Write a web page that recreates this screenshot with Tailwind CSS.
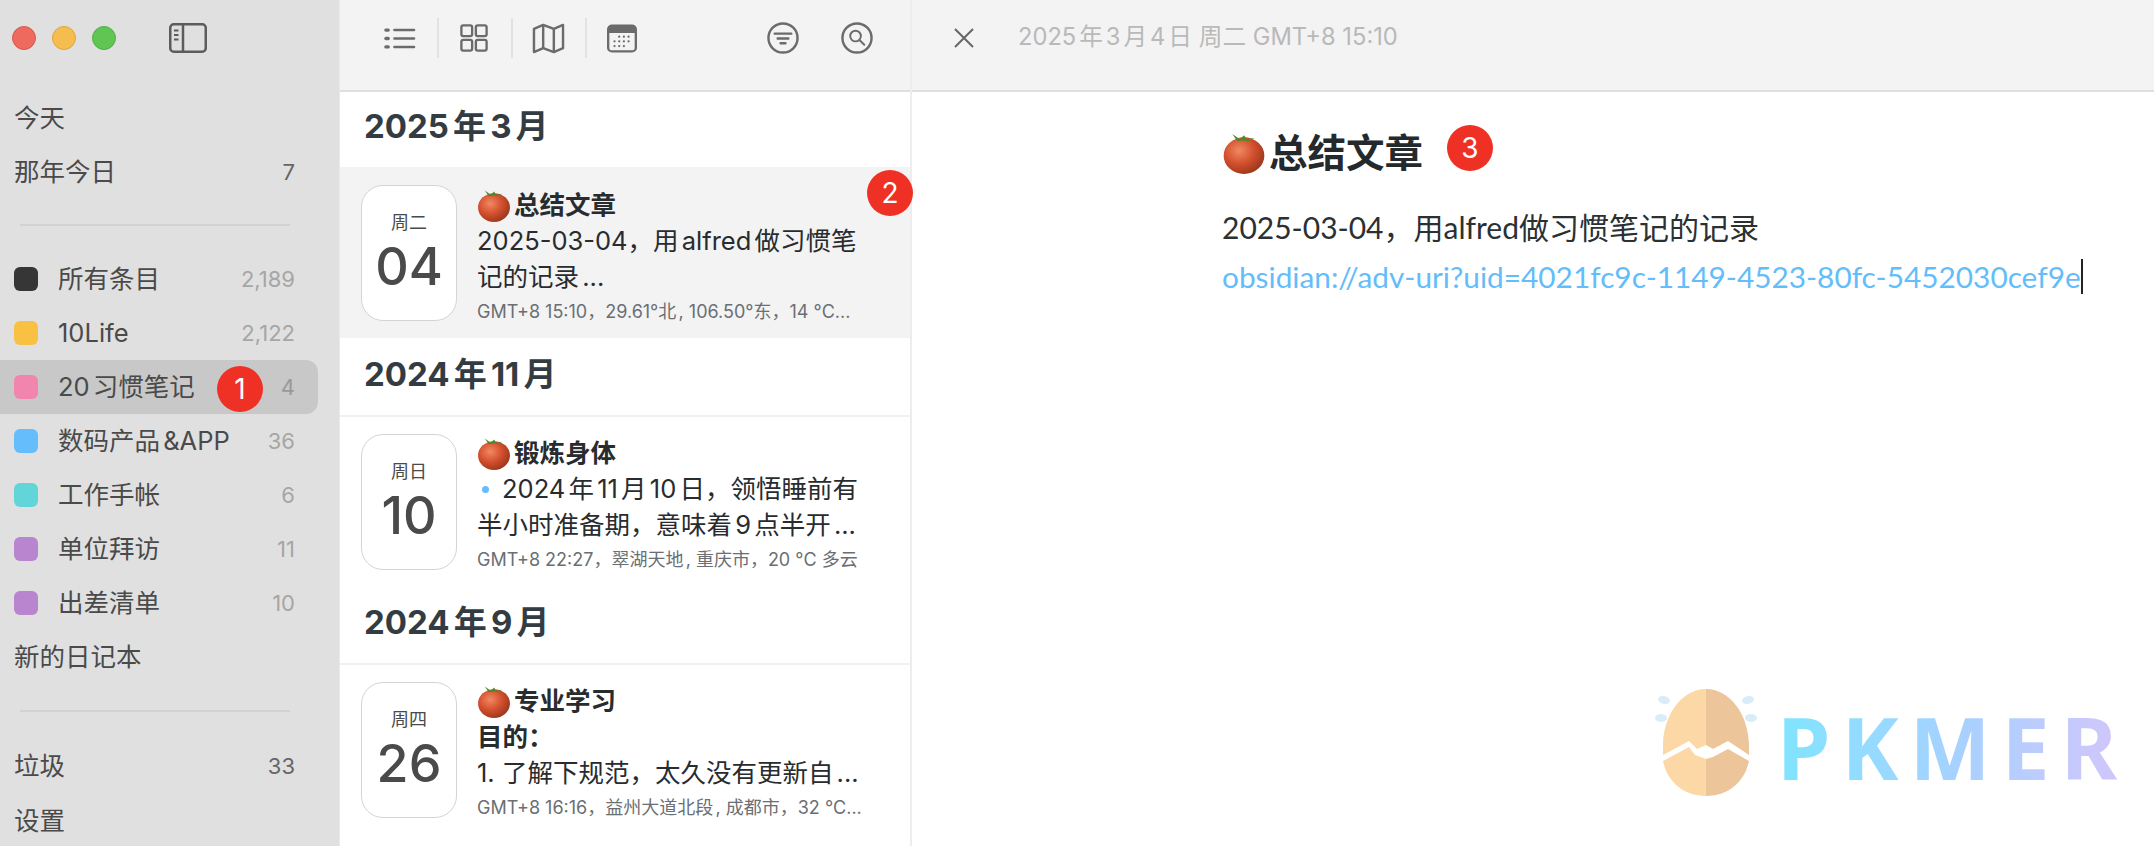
<!DOCTYPE html>
<html lang="zh-CN">
<head>
    <meta charset="UTF-8">
    <title>日记</title>
    <script src="https://cdn.jsdelivr.net/npm/@tailwindcss/browser@4"></script>
</head>
<body class="bg-white overflow-hidden font-['Inter','Noto_Sans_CJK_SC',sans-serif] [text-autospace:normal]">
    <!-- shared tomato emoji -->
    <svg class="absolute w-0 h-0" aria-hidden="true">
        <defs>
            <radialGradient id="tomato-fill" cx="38%" cy="36%" r="72%">
                <stop offset="0" stop-color="#f08a62"/>
                <stop offset="0.5" stop-color="#d4502e"/>
                <stop offset="1" stop-color="#93341a"/>
            </radialGradient>
            <symbol id="tomato" viewBox="0 0 32 32">
                <ellipse cx="16" cy="18" rx="15.500" ry="14" fill="url(#tomato-fill)"/>
                <path d="M7 1.500 13 5.500 16 2.500 18 5.500 24 4.500 19.500 7 16 6.500 11 7Z" fill="#4d8a2c"/>
            </symbol>
        </defs>
    </svg>

    <div class="flex h-[846px] w-[2154px]">
        <!-- sidebar -->
        <aside class="w-[340px] shrink-0 bg-[#e0e0e0] border-r border-[#e9e9e9] text-[25.500px] text-[#4a4a4a]">
            <div class="h-[91px] flex items-center pl-[12px] pb-[15px]">
                <span class="w-[24px] h-[24px] rounded-full bg-[#ee6a5f] border border-[#d9574d]"></span>
                <span class="w-[24px] h-[24px] rounded-full bg-[#f5bd4f] border border-[#dfa63d] ml-[16px]"></span>
                <span class="w-[24px] h-[24px] rounded-full bg-[#61c554] border border-[#52ae46] ml-[16px]"></span>
                <svg class="ml-[53px] w-[38px] h-[30px]" viewBox="0 0 38 30" fill="none" stroke="#5c5c5c" stroke-width="2.500">
                    <rect x="1.250" y="1.250" width="35.500" height="27.500" rx="3.500"/>
                    <path d="M14 1.250v27.500"/>
                    <path d="M5 7.500h4.500M5 12h4.500M5 16.500h4.500" stroke-width="2"/>
                </svg>
            </div>
            <div class="w-[318px] h-[54px] flex items-center pl-[14px]">今天</div>
            <div class="w-[318px] h-[54px] flex items-center justify-between pl-[14px] pr-[23px]"><span>那年今日</span><span class="text-[22px] text-[#666666]">7</span></div>

            <div class="h-[2px] w-[270px] ml-[20px] mt-[25px] mb-[26px] bg-[#d2d2d2]"></div>

            <div class="w-[318px] h-[54px] flex items-center pl-[14px] pr-[23px]">
                <span class="w-[24px] h-[24px] rounded-[6px] bg-[#363636]"></span><span class="ml-[20px] flex-1">所有条目</span><span class="text-[22px] text-[#a6a6a6]">2,189</span>
            </div>
            <div class="w-[318px] h-[54px] flex items-center pl-[14px] pr-[23px]">
                <span class="w-[24px] h-[24px] rounded-[6px] bg-[#f8c144]"></span><span class="ml-[20px] flex-1">10Life</span><span class="text-[22px] text-[#a6a6a6]">2,122</span>
            </div>
            <div class="relative w-[318px] h-[54px] flex items-center pl-[14px] pr-[23px] bg-[#c8c8c8] rounded-r-[12px]">
                <span class="w-[24px] h-[24px] rounded-[6px] bg-[#f285ae]"></span><span class="ml-[20px] flex-1">20习惯笔记</span><span class="text-[22px] text-[#999999]">4</span>
                <span class="absolute left-[217px] top-[6px] w-[46px] h-[46px] rounded-full bg-[#ee3124] text-white text-[28px] flex items-center justify-center">1</span>
            </div>
            <div class="w-[318px] h-[54px] flex items-center pl-[14px] pr-[23px]">
                <span class="w-[24px] h-[24px] rounded-[6px] bg-[#65bdfb]"></span><span class="ml-[20px] flex-1">数码产品&amp;APP</span><span class="text-[22px] text-[#a6a6a6]">36</span>
            </div>
            <div class="w-[318px] h-[54px] flex items-center pl-[14px] pr-[23px]">
                <span class="w-[24px] h-[24px] rounded-[6px] bg-[#62d5d8]"></span><span class="ml-[20px] flex-1">工作手帐</span><span class="text-[22px] text-[#a6a6a6]">6</span>
            </div>
            <div class="w-[318px] h-[54px] flex items-center pl-[14px] pr-[23px]">
                <span class="w-[24px] h-[24px] rounded-[6px] bg-[#b985cf]"></span><span class="ml-[20px] flex-1">单位拜访</span><span class="text-[22px] text-[#a6a6a6]">11</span>
            </div>
            <div class="w-[318px] h-[54px] flex items-center pl-[14px] pr-[23px]">
                <span class="w-[24px] h-[24px] rounded-[6px] bg-[#b985cf]"></span><span class="ml-[20px] flex-1">出差清单</span><span class="text-[22px] text-[#a6a6a6]">10</span>
            </div>
            <div class="w-[318px] h-[54px] flex items-center pl-[14px]">新的日记本</div>

            <div class="h-[2px] w-[270px] ml-[20px] mt-[26px] mb-[27px] bg-[#d2d2d2]"></div>

            <div class="w-[318px] h-[54px] flex items-center justify-between pl-[14px] pr-[23px]"><span>垃圾</span><span class="text-[22px] text-[#666666]">33</span></div>
            <div class="w-[318px] h-[54px] mt-[1px] flex items-center pl-[14px]">设置</div>
        </aside>

        <!-- entry list -->
        <section class="w-[572px] shrink-0 border-r-2 border-[#ededed]">
            <div class="h-[92px] bg-[#f3f3f3] border-b-2 border-[#dfdfdf] flex items-center pb-[14px]">
                <svg class="ml-[44px] w-[32px] h-[23px]" viewBox="0 0 34 24" fill="none" stroke="#6b6b6b" stroke-width="2.500" stroke-linecap="round">
                    <path d="M11 3h21M11 12h21M11 21h21"/>
                    <path d="M2 3h2.500M2 12h2.500M2 21h2.500" stroke-width="3.500"/>
                </svg>
                <span class="ml-[21px] w-[2px] h-[40px] bg-[#e2e2e2]"></span>
                <svg class="ml-[21px] w-[28px] h-[28px]" viewBox="0 0 30 30" fill="none" stroke="#6b6b6b" stroke-width="2.500">
                    <rect x="1.500" y="1.500" width="11.500" height="11.500" rx="2"/><rect x="17" y="1.500" width="11.500" height="11.500" rx="2"/>
                    <rect x="1.500" y="17" width="11.500" height="11.500" rx="2"/><rect x="17" y="17" width="11.500" height="11.500" rx="2"/>
                </svg>
                <span class="ml-[23px] w-[2px] h-[40px] bg-[#e2e2e2]"></span>
                <svg class="ml-[19px] w-[33px] h-[31px]" viewBox="0 0 34 32" fill="none" stroke="#6b6b6b" stroke-width="2.500" stroke-linejoin="round">
                    <path d="M2 6 11.500 2 22.500 6 32 2V26L22.500 30 11.500 26 2 30Z"/>
                    <path d="M11.500 2V26M22.500 6V30"/>
                </svg>
                <span class="ml-[20px] w-[2px] h-[40px] bg-[#e2e2e2]"></span>
                <svg class="ml-[20px] w-[30px] h-[29px]" viewBox="0 0 32 30">
                    <rect x="1.250" y="1.250" width="29.500" height="27.500" rx="4" fill="none" stroke="#6b6b6b" stroke-width="2.500"/>
                    <path d="M1.250 5.250a4 4 0 0 1 4-4h21.500a4 4 0 0 1 4 4V9H1.250Z" fill="#6b6b6b"/>
                    <g fill="#6b6b6b">
                        <circle cx="13" cy="13" r="1.200"/><circle cx="18" cy="13" r="1.200"/><circle cx="23" cy="13" r="1.200"/>
                        <circle cx="8" cy="18" r="1.200"/><circle cx="13" cy="18" r="1.200"/><circle cx="18" cy="18" r="1.200"/><circle cx="23" cy="18" r="1.200"/>
                        <circle cx="8" cy="23" r="1.200"/><circle cx="13" cy="23" r="1.200"/><circle cx="18" cy="23" r="1.200"/>
                    </g>
                </svg>
                <svg class="ml-[130px] w-[32px] h-[32px]" viewBox="0 0 33 33" fill="none" stroke="#6b6b6b" stroke-width="2.500" stroke-linecap="round">
                    <circle cx="16.500" cy="16.500" r="15"/>
                    <path d="M8 12h17M11 17h11M14 22h5"/>
                </svg>
                <svg class="ml-[42px] w-[32px] h-[32px]" viewBox="0 0 33 33" fill="none" stroke="#6b6b6b" stroke-width="2.500" stroke-linecap="round">
                    <circle cx="16.500" cy="16.500" r="15"/>
                    <circle cx="15" cy="14.500" r="5.500" stroke-width="2"/>
                    <path d="M19 18.500 24 23.500" stroke-width="2"/>
                </svg>
            </div>

            <div class="h-[75px] flex items-center pl-[24px] pb-[5px] text-[33px] font-bold text-[#333c42]">2025年3月</div>
            <div class="relative h-[171px] bg-[#f3f3f3] flex pl-[21px] pt-[18px]">
                <div class="w-[96px] h-[136px] shrink-0 bg-white border border-[#d4d4d4] rounded-[22px] flex flex-col items-center justify-center text-[#4a4a4a]">
                    <div class="text-[18px] leading-[24px] mb-[4px]">周二</div>
                    <div class="text-[52px] leading-[56px] font-medium">04</div>
                </div>
                <div class="ml-[20px] pt-[2px] whitespace-nowrap text-[25.500px] leading-[36px] text-[#282c2f]">
                    <div class="flex items-center font-bold h-[36px]"><svg class="w-[34px] h-[33px] mr-[3px]"><use href="#tomato"/></svg>总结文章</div>
                    <div>2025-03-04，用alfred做习惯笔</div>
                    <div>记的记录...</div>
                    <div class="text-[18px] leading-[34px] text-[#6a6f73]">GMT+8 15:10，29.61°北, 106.50°东，14 °C...</div>
                </div>
                <span class="absolute left-[527px] top-[3px] w-[46px] h-[46px] rounded-full bg-[#ee3124] text-white text-[28px] flex items-center justify-center">2</span>
            </div>

            <div class="h-[79px] border-b-2 border-[#f1f1f1] flex items-center pl-[24px] pb-[3px] text-[33px] font-bold text-[#333c42]">2024年11月</div>
            <div class="h-[169px] flex pl-[21px] pt-[17px]">
                <div class="w-[96px] h-[136px] shrink-0 bg-white border border-[#d4d4d4] rounded-[22px] flex flex-col items-center justify-center text-[#4a4a4a]">
                    <div class="text-[18px] leading-[24px] mb-[4px]">周日</div>
                    <div class="text-[52px] leading-[56px] font-medium">10</div>
                </div>
                <div class="ml-[20px] pt-[1px] whitespace-nowrap text-[25.500px] leading-[36px] text-[#282c2f]">
                    <div class="flex items-center font-bold h-[36px]"><svg class="w-[34px] h-[33px] mr-[3px]"><use href="#tomato"/></svg>锻炼身体</div>
                    <div class="flex items-center"><span class="w-[7px] h-[7px] ml-[5px] mr-[13px] rounded-full bg-[#65bdfb]"></span>2024年11月10日，领悟睡前有</div>
                    <div>半小时准备期，意味着9点半开...</div>
                    <div class="text-[18px] leading-[34px] text-[#6a6f73]">GMT+8 22:27，翠湖天地, 重庆市，20 °C 多云</div>
                </div>
            </div>

            <div class="h-[79px] border-b-2 border-[#f1f1f1] flex items-center pl-[24px] pb-[3px] text-[33px] font-bold text-[#333c42]">2024年9月</div>
            <div class="h-[169px] flex pl-[21px] pt-[17px]">
                <div class="w-[96px] h-[136px] shrink-0 bg-white border border-[#d4d4d4] rounded-[22px] flex flex-col items-center justify-center text-[#4a4a4a]">
                    <div class="text-[18px] leading-[24px] mb-[4px]">周四</div>
                    <div class="text-[52px] leading-[56px] font-medium">26</div>
                </div>
                <div class="ml-[20px] pt-[1px] whitespace-nowrap text-[25.500px] leading-[36px] text-[#282c2f]">
                    <div class="flex items-center font-bold h-[36px]"><svg class="w-[34px] h-[33px] mr-[3px]"><use href="#tomato"/></svg>专业学习</div>
                    <div class="font-bold">目的：</div>
                    <div>1. 了解下规范，太久没有更新自...</div>
                    <div class="text-[18px] leading-[34px] text-[#6a6f73]">GMT+8 16:16，益州大道北段, 成都市，32 °C...</div>
                </div>
            </div>
        </section>

        <!-- entry detail -->
        <main class="relative flex-1">
            <div class="h-[92px] bg-[#f3f3f3] border-b-2 border-[#dfdfdf] flex items-center pb-[14px]">
                <svg class="ml-[42px] w-[20px] h-[20px]" viewBox="0 0 20 20" fill="none" stroke="#666666" stroke-width="2"><path d="M1 1 19 19M19 1 1 19"/></svg>
                <span class="ml-[44px] pb-[3px] text-[23.700px] text-[#b9b9b9]">2025年3月4日 周二 GMT+8 15:10</span>
            </div>
            <div class="relative pl-[310px] pt-[36px] font-['Lato','Noto_Sans_CJK_SC',sans-serif] [text-autospace:no-autospace]">
                <h1 class="flex items-center h-[50px] text-[38.500px] font-bold text-[#24292c]"><svg class="w-[44px] h-[42px] mr-[3px]"><use href="#tomato"/></svg>总结文章</h1>
                <span class="absolute left-[535px] top-[33px] w-[46px] h-[46px] rounded-full bg-[#ee3124] text-white text-[28px] flex items-center justify-center font-['Inter']">3</span>
                <p class="mt-[24px] text-[30px] leading-[50px] text-[#2b3033]">2025-03-04，用alfred做习惯笔记的记录</p>
                <p class="text-[29.800px] leading-[50px] text-[#64bdfb] whitespace-nowrap"><span class="border-r-2 border-[#222222]">obsidian://adv-uri?uid=4021fc9c-1149-4523-80fc-5452030cef9e</span></p>
            </div>

            <!-- watermark -->
            <div class="absolute left-[739px] top-[685px] flex items-center">
                <svg class="w-[110px] h-[115px]" viewBox="0 0 110 115">
                    <ellipse cx="13" cy="15" rx="6" ry="4" fill="#d9ecf8" transform="rotate(15 13 15)"/>
                    <ellipse cx="10" cy="33" rx="6" ry="4" fill="#d9ecf8"/>
                    <ellipse cx="97" cy="15" rx="6" ry="4" fill="#d9ecf8" transform="rotate(-15 97 15)"/>
                    <ellipse cx="100" cy="33" rx="6" ry="4" fill="#d9ecf8"/>
                    <path d="M12 59C13 28 32 4 55 4V60L46 64 38 56 27 62 12 70Z" fill="#fcd8a6"/>
                    <path d="M55 4C78 4 97 28 98 59V70L77 56 62 64 55 60Z" fill="#edc59a"/>
                    <path d="M12 76 27 68 38 62 44 70 55 74V111C32 111 16 96 12 76Z" fill="#fcd8a6"/>
                    <path d="M98 76 77 64 62 72 55 74V111C78 111 94 96 98 76Z" fill="#edc59a"/>
                </svg>
                <span class="ml-[16px] mt-[9px] text-[86px] leading-none font-bold tracking-[11px] font-['Noto_Sans'] bg-linear-to-r from-[#7fe4ff] via-[#a5d2ff] to-[#d2c5fb] bg-clip-text text-transparent">PKMER</span>
            </div>
        </main>
    </div>
</body>
</html>
